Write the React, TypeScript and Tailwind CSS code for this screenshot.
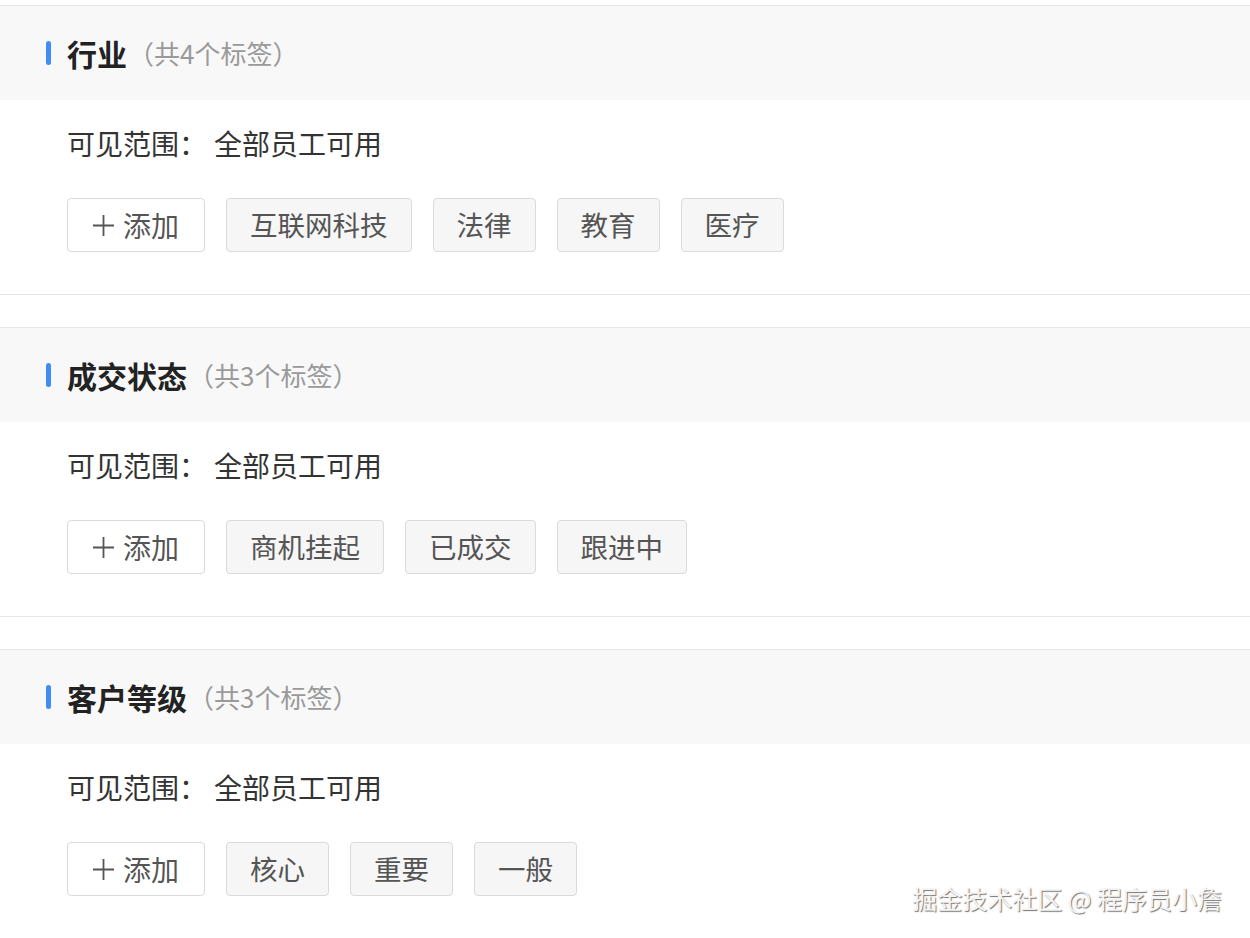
import React from 'react';

type TagGroup = {
  name: string;
  scope: string;
  tags: string[];
};

const groups: TagGroup[] = [
  { name: '行业', scope: '全部员工可用', tags: ['互联网科技', '法律', '教育', '医疗'] },
  { name: '成交状态', scope: '全部员工可用', tags: ['商机挂起', '已成交', '跟进中'] },
  { name: '客户等级', scope: '全部员工可用', tags: ['核心', '重要', '一般'] },
];

const font = { fontFamily: '"Noto Sans CJK SC", "Noto Sans", sans-serif' };

function PlusIcon() {
  return (
    <svg width="21" height="21" viewBox="0 0 21 21" fill="none" stroke="#555" strokeWidth="1.8">
      <path d="M10.5 0v21M0 10.5h21" />
    </svg>
  );
}

function GroupSection({ group }: { group: TagGroup }) {
  return (
    <section className="border-y border-[#e8e8e8]">
      <header className="flex h-[94px] items-center bg-[#f8f8f8] pl-[46px]">
        <span className="h-[24px] w-[5px] rounded-full bg-[#3f8cf6]" />
        <h2 className="ml-[16px] text-[30px] font-bold leading-none text-[#222]">{group.name}</h2>
        <span className="ml-[1px] text-[26px] leading-none text-[#9a9a9a]">
          （共{group.tags.length}个标签）
        </span>
      </header>
      <div className="h-[194px] pl-[67px] pt-[22px]">
        <p className="text-[28px] leading-[42px] text-[#333]">
          可见范围：<span className="ml-[7px]">{group.scope}</span>
        </p>
        <div className="mt-[34px] flex gap-[21px]">
          <button className="flex h-[54px] items-center gap-[9px] rounded-[4px] border border-[#dadada] bg-white px-[25px] text-[28px] text-[#555]">
            <PlusIcon />
            <span className="leading-none">添加</span>
          </button>
          {group.tags.map((t) => (
            <span
              key={t}
              className="flex h-[54px] items-center rounded-[4px] border border-[#dadada] bg-[#f6f6f6] px-[23px] text-[27.5px] leading-none text-[#555]"
            >
              {t}
            </span>
          ))}
        </div>
      </div>
    </section>
  );
}

export default function App() {
  return (
    <div className="relative h-[938px] w-[1250px] overflow-hidden bg-white pt-[5px]" style={font}>
      <div className="flex flex-col gap-[32px]">
        {groups.map((g) => (
          <GroupSection key={g.name} group={g} />
        ))}
      </div>
      <div className="absolute right-[28px] top-[880px] text-[25px] leading-[36px] text-[#f4f4f4] [text-shadow:1px_1px_1px_rgba(0,0,0,0.55)]">
        掘金技术社区 @ 程序员小詹
      </div>
    </div>
  );
}
